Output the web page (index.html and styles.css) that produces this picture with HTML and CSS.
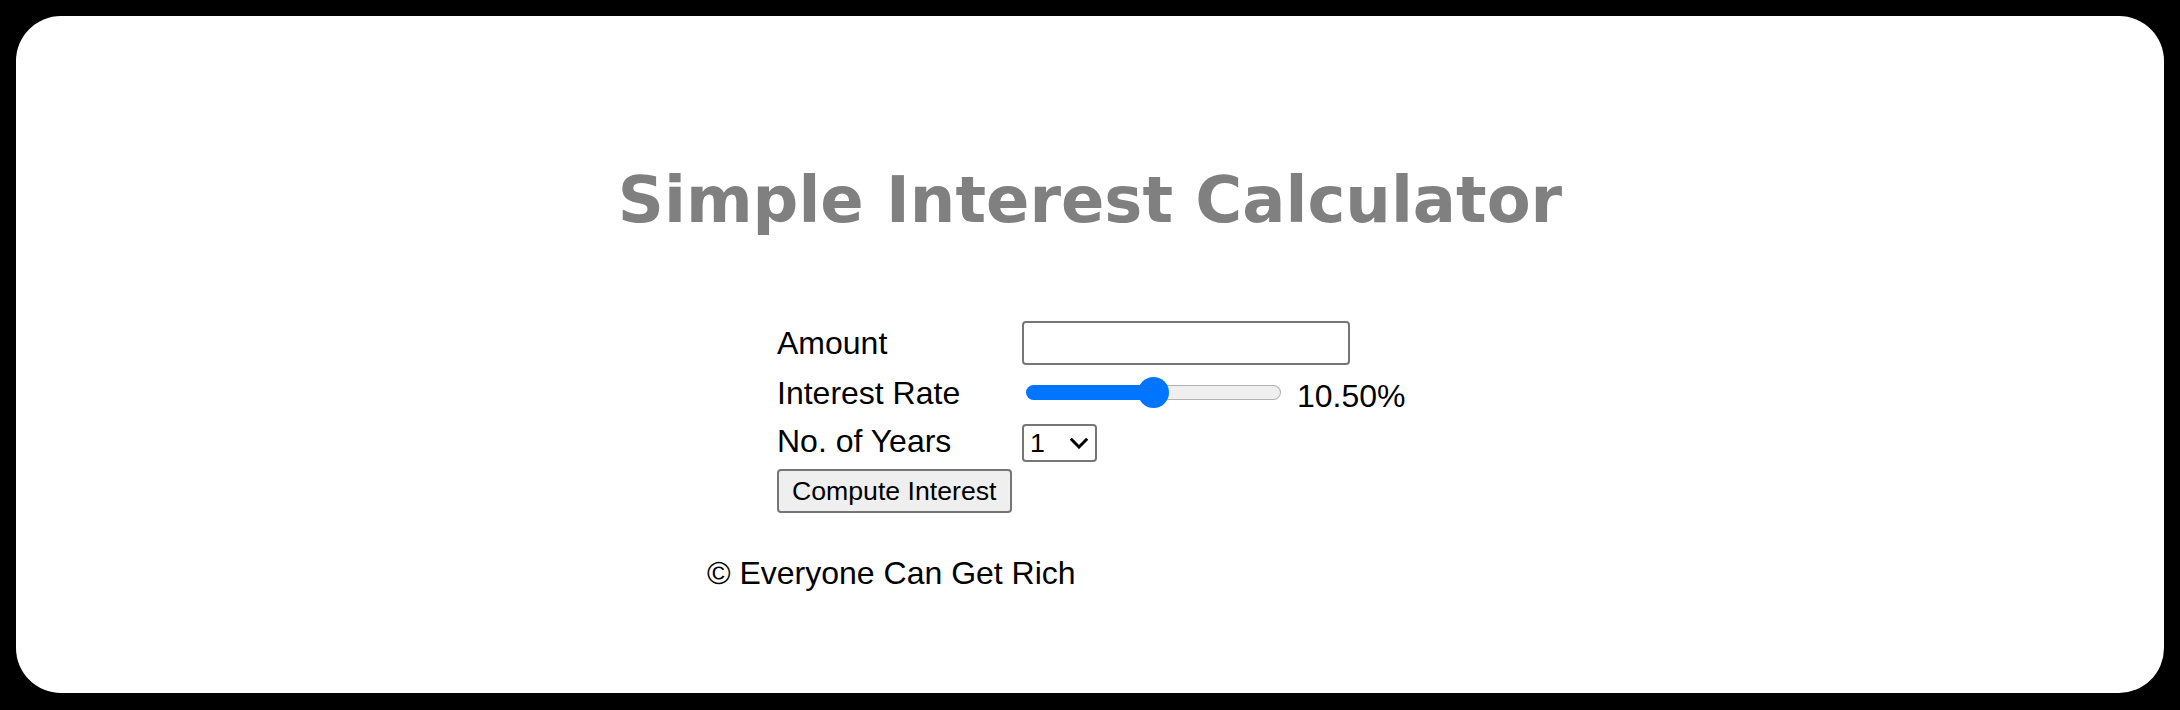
FILE: index.html
```html
<!DOCTYPE html>
<html lang="en">
<head>
<meta charset="utf-8">
<title>Simple Interest Calculator</title>
<link rel="stylesheet" href="styles.css">
</head>
<body>
<div class="card">
  <h1 class="title">Simple Interest Calculator</h1>
  <div class="content">
    <form class="calc">
      <label class="lbl" for="amount">Amount</label>
      <div class="field"><input class="amount" id="amount" type="number"></div>

      <label class="lbl lbl-rate" for="rate">Interest Rate</label>
      <div class="field rate-field">
        <input class="rate" id="rate" type="range" min="1" max="20" step="0.25" value="10.5">
        <span class="rate-value">10.50%</span>
      </div>

      <label class="lbl lbl-years" for="years">No. of Years</label>
      <div class="field">
        <div class="select-wrap">
          <select class="years" id="years">
            <option>1</option>
            <option>2</option>
            <option>3</option>
            <option>4</option>
            <option>5</option>
          </select>
          <svg class="chev" width="18" height="11" viewBox="0 0 18 11" aria-hidden="true">
            <polyline points="1.8,1.8 9,9 16.2,1.8" fill="none" stroke="#000" stroke-width="3" stroke-linecap="square" stroke-linejoin="miter"/>
          </svg>
        </div>
      </div>

      <div class="btn-row"><button type="button" class="compute">Compute Interest</button></div>
    </form>
    <p class="footer">© Everyone Can Get Rich</p>
  </div>
</div>
</body>
</html>
```

FILE: styles.css
```css
html {
  background: #000;
}
body {
  margin: 0;
  padding: 16px 16px 0 16px;
  background: #000;
  font-family: "Liberation Sans", Arial, sans-serif;
}
.card {
  background: #fff;
  border-radius: 45px;
  height: 677px;
  padding-top: 147px;
  box-sizing: border-box;
}
.title {
  margin: 0;
  text-align: center;
  font-family: "DejaVu Sans", Verdana, sans-serif;
  font-weight: bold;
  font-size: 64px;
  line-height: 74px;
  color: #808080;
}
.content {
  width: 766px;
  margin: 84px auto 0 auto;
}
.calc {
  margin: 0 0 0 70px;
  display: grid;
  grid-template-columns: 245px auto;
  grid-template-rows: 44px 54px 48px auto;
  align-items: center;
}
.lbl {
  font-size: 32px;
  line-height: 37px;
  color: #000;
}
.lbl-rate {
  padding-top: 3px;
}
.lbl-years {
  padding-bottom: 3px;
}
.field {
  display: flex;
  align-items: center;
}
.amount {
  width: 328px;
  height: 44px;
  box-sizing: border-box;
  border: 2px solid #767676;
  border-radius: 4px;
  padding: 2px 4px;
  font-family: "Liberation Sans", Arial, sans-serif;
  font-size: 26.67px;
  margin: 0;
  background: #fff;
  -moz-appearance: textfield;
}
.amount::-webkit-outer-spin-button,
.amount::-webkit-inner-spin-button {
  -webkit-appearance: none;
  margin: 0;
}
.rate {
  -webkit-appearance: none;
  appearance: none;
  width: 255px;
  height: 31px;
  margin: 0 4px;
  padding: 0;
  background: transparent;
}
.rate::-webkit-slider-runnable-track {
  box-sizing: border-box;
  height: 15px;
  border-radius: 8px;
  border: 1px solid transparent;
  background:
    linear-gradient(to right, #0075ff 50%, transparent 50%) border-box,
    linear-gradient(#efefef, #efefef) padding-box,
    linear-gradient(#b2b2b2, #b2b2b2) border-box;
}
.rate::-webkit-slider-thumb {
  -webkit-appearance: none;
  appearance: none;
  width: 31px;
  height: 31px;
  border-radius: 50%;
  background: #0075ff;
  border: none;
  margin-top: -9px;
}
.rate-value {
  margin-left: 12px;
  padding-top: 8px;
  font-size: 32px;
  line-height: 37px;
  color: #000;
}
.select-wrap {
  position: relative;
  display: inline-block;
}
.years {
  -webkit-appearance: none;
  appearance: none;
  width: 75px;
  height: 38px;
  box-sizing: border-box;
  border: 2px solid #767676;
  border-radius: 4px;
  padding: 0 6px;
  margin: 0;
  background: #fff;
  color: #000;
  font-family: "Liberation Sans", Arial, sans-serif;
  font-size: 26.67px;
  display: block;
}
.chev {
  position: absolute;
  right: 9px;
  top: 14px;
  pointer-events: none;
}
.btn-row {
  grid-column: 1 / span 2;
  padding-top: 2px;
}
.compute {
  height: 44px;
  box-sizing: border-box;
  margin: 0;
  padding: 0 14px 0 13px;
  border: 2px solid #767676;
  border-radius: 4px;
  background: #efefef;
  color: #000;
  font-family: "Liberation Sans", Arial, sans-serif;
  font-size: 26.67px;
  line-height: 30px;
}
.footer {
  margin: 42px 0 0 0;
  font-size: 32px;
  line-height: 37px;
  color: #000;
}
```
